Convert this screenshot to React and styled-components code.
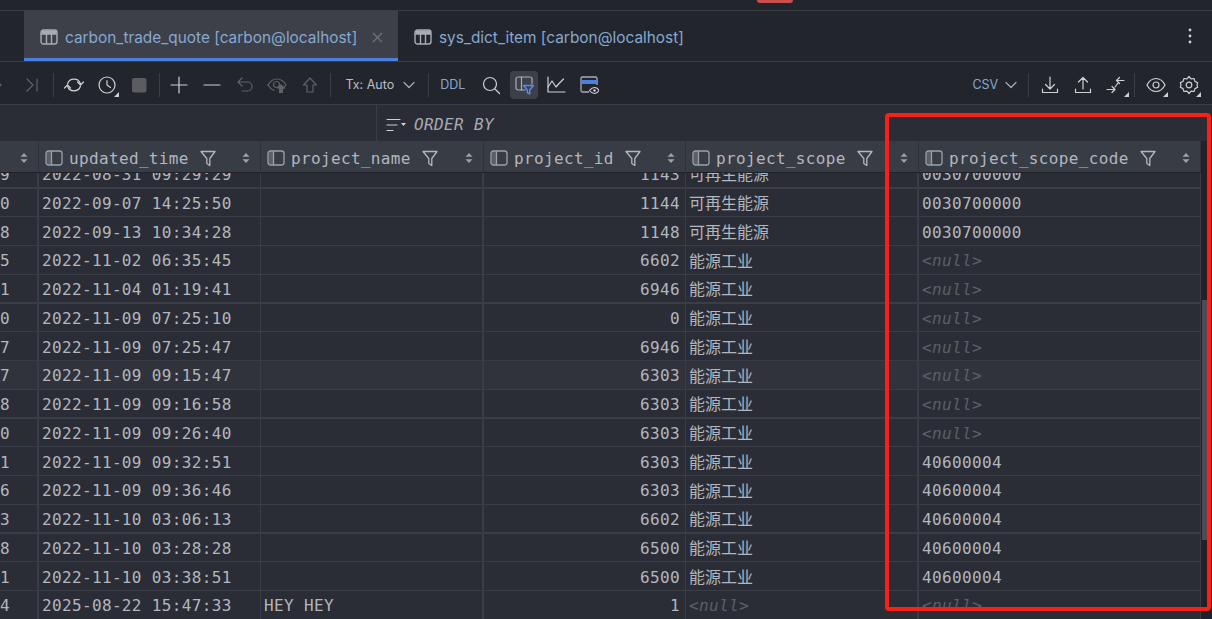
import * as React from "react"
import styled, { createGlobalStyle } from 'styled-components'

const MONO = `"DejaVu Sans Mono", "Liberation Mono", "Noto Sans CJK SC", monospace`
const UI = `Inter, "Noto Sans", sans-serif`

const GlobalStyle = createGlobalStyle`
  html, body {
    margin: 0;
    padding: 0;
    background: #2a2d35;
    overflow: hidden;
  }
`

const Screen = styled.div`
  position: relative;
  width: 1212px;
  height: 619px;
  overflow: hidden;
  display: flex;
  flex-direction: column;
  background: #2a2d35;
`

const TopStrip = styled.div`
  height: 10px;
  flex: none;
  display: flex;
  justify-content: flex-start;
  background: #22252c;
  border-bottom: 1px solid #3a3d45;
`

const RedTab = styled.div`
  width: 36px;
  height: 3px;
  margin-left: 757px;
  background: #c94f4f;
  border-radius: 0 0 5px 5px;
`

const TabBar = styled.div`
  height: 50px;
  flex: none;
  display: flex;
  align-items: stretch;
  padding-left: 24px;
  background: #22252c;
  border-bottom: 1px solid #3a3d45;
`

const Tab = styled.div`
  display: flex;
  align-items: center;
  width: ${p => p.$width}px;
  padding-left: 16px;
  padding-top: 2px;
  box-sizing: border-box;
  font-family: ${UI};
  font-size: 15.4px;
  color: #86a8d2;
  white-space: nowrap;
  background: ${p => (p.$active ? '#3d4049' : 'transparent')};
  box-shadow: ${p => (p.$active ? 'inset 0 -3px 0 #4a80e0' : 'none')};
`

const TabIcon = styled.svg`
  width: 18px;
  height: 16px;
  margin-right: 7px;
  flex: none;
`

const TabClose = styled.svg`
  width: 11px;
  height: 11px;
  margin-left: 15px;
  flex: none;
`

const MoreDots = styled.div`
  margin-left: auto;
  width: 44px;
  display: flex;
  align-items: center;
  justify-content: center;
  color: #ced0d6;
`

const Toolbar = styled.div`
  height: 42px;
  flex: none;
  display: flex;
  align-items: center;
  box-sizing: content-box;
  padding-top: 0;
  background: #22252c;
  border-bottom: 1px solid #3a3d45;
  overflow: hidden;
`

const ToolRow = styled.div`
  flex: 1;
  min-width: 0;
  display: flex;
  align-items: center;
  padding-top: 3px;
`

const ToolButton = styled.div`
  position: relative;
  width: ${p => p.$width || 32.75}px;
  height: 28px;
  flex: none;
  display: flex;
  align-items: center;
  justify-content: center;
  border-radius: 4px;
  background: ${p => (p.$active ? '#3d4049' : 'transparent')};
  margin-left: ${p => p.$offset || 0}px;
`

const CornerMark = styled.span`
  position: absolute;
  right: 4px;
  bottom: 2px;
  width: 0;
  height: 0;
  border-style: solid;
  border-width: 0 0 5px 5px;
  border-color: transparent transparent #ced0d6 transparent;
`

const ToolSep = styled.div`
  width: 1px;
  height: 24px;
  flex: none;
  margin: ${p => p.$margin || '0 4px'};
  background: #3a3d45;
`

const ToolText = styled.span`
  flex: none;
  font-family: ${UI};
  font-size: 12.5px;
  color: ${p => p.$color || '#bcbec4'};
  margin-left: ${p => p.$left || 0}px;
`

const Chevron = styled.svg`
  width: 12px;
  height: 8px;
  flex: none;
  margin-left: ${p => p.$left}px;
  margin-right: ${p => p.$right}px;
`

const Spacer = styled.div`
  flex: ${p => (p.$size ? `0 0 ${p.$size}px` : 1)};
`

const FilterBar = styled.div`
  height: 36px;
  flex: none;
  display: flex;
  background: #2a2d35;
`

const WhereSide = styled.div`
  width: 376px;
  flex: none;
  border-right: 1px solid #3a3d45;
`

const OrderSide = styled.div`
  display: flex;
  align-items: center;
  padding-left: 9px;
  padding-top: 3px;
  font-family: ${MONO};
  font-style: italic;
  font-size: 16px;
  letter-spacing: 0.35px;
  color: #a8abb3;
`

const OrderLabel = styled.span`
  margin-left: 8px;
`

const TableArea = styled.div`
  flex: 1;
  min-height: 0;
  display: flex;
`

const TableMain = styled.div`
  width: 1201px;
  flex: none;
  display: flex;
  flex-direction: column;
  min-height: 0;
`

const HeaderRow = styled.div`
  height: 32px;
  flex: none;
  display: grid;
  grid-template-columns: 39px 222px 223px 202px 233px 282px;
  background: #383c45;
  border-bottom: 1px solid #1f2228;
  box-sizing: border-box;
  position: relative;
  z-index: 1;
`

const HeaderCell = styled.div`
  display: flex;
  align-items: center;
  box-sizing: border-box;
  padding: 3px 10px 0 6px;
  border-right: 1px solid #2f323a;
  font-family: ${MONO};
  font-size: 16px;
  letter-spacing: 0.35px;
  color: #b3b6bd;
  white-space: nowrap;
`

const ColumnIcon = styled.svg`
  width: 18px;
  height: 16px;
  flex: none;
  margin-right: 6px;
`

const FunnelIcon = styled.svg`
  width: 16px;
  height: 17px;
  flex: none;
  margin-left: 11px;
`

const SortIcon = styled.svg`
  width: 8px;
  height: 12px;
  flex: none;
  margin-left: auto;
`

const RowsClip = styled.div`
  flex: 1;
  min-height: 0;
  overflow: hidden;
`

const RowsInner = styled.div`
  margin-top: -13.25px;
`

const Row = styled.div`
  height: 28.75px;
  box-sizing: border-box;
  display: grid;
  grid-template-columns: 39px 222px 223px 202px 233px 282px;
  align-items: stretch;
  background: ${p => (p.$hover ? '#30333b' : 'transparent')};
  border-bottom: ${p => (p.$heavy ? '2px' : '1px')} solid #3a3d45;
`

const Cell = styled.div`
  display: flex;
  align-items: center;
  justify-content: ${p => (p.$right ? 'flex-end' : 'flex-start')};
  box-sizing: border-box;
  padding: 2px 5px 0 3px;
  border-right: ${p => (p.$thick ? '2px' : '1px')} solid #3a3d45;
  font-family: ${MONO};
  font-size: 16px;
  letter-spacing: 0.35px;
  color: #b3b6bd;
  white-space: nowrap;
  overflow: hidden;
`

const EdgeDigit = styled(Cell)`
  padding-left: 0;
`

const CjkText = styled.span`
  font-family: "Noto Sans CJK SC", sans-serif;
  font-size: 16px;
  letter-spacing: 0;
  margin-top: -2px;
`

const NullText = styled.span`
  font-style: italic;
  color: #5c5f66;
`

const ScrollTrack = styled.div`
  flex: 1;
  background: #1f2228;
  box-sizing: border-box;
  padding-left: 1px;
`

const ScrollThumb = styled.div`
  width: 5px;
  height: 240px;
  margin-top: 159px;
  background: #4a4d55;
`

const Highlight = styled.div`
  position: absolute;
  left: 885px;
  top: 113px;
  width: 326px;
  height: 498px;
  box-sizing: border-box;
  border: 4px solid #fb2014;
  border-radius: 4px;
  pointer-events: none;
  z-index: 3;
`

const stroke = { fill: 'none', stroke: '#ced0d6', strokeWidth: 1.2, strokeLinecap: 'round', strokeLinejoin: 'round' }
const dim = { ...stroke, stroke: '#5f6267' }

const Svg = ({ children, w = 20, h = 20 }) => (
  <svg width={w} height={h} viewBox={`0 0 ${w} ${h}`} style={{ display: 'block' }}>{children}</svg>
)

const TableGlyph = () => (
  <TabIcon viewBox="0 0 18 16">
    <g fill="none" stroke="#a9acb3" strokeWidth="1.4">
      <rect x="1" y="1" width="16" height="14" rx="2.5" />
      <path d="M1 5h16M6.5 5v10M11.5 5v10" />
    </g>
    <rect x="1.5" y="1.5" width="15" height="3.5" rx="1.5" fill="#a9acb3" />
  </TabIcon>
)

const SortGlyph = () => (
  <SortIcon viewBox="0 0 8 12">
    <path d="M4 1L7.5 4.8H.5zM4 11L.5 7.2h7z" fill="#9da0a8" />
  </SortIcon>
)

const HeaderLabel = ({ name }) => (
  <HeaderCell>
    <ColumnIcon viewBox="0 0 18 16">
      <g fill="none" stroke="#9da0a8" strokeWidth="1.3">
        <rect x="1" y="1" width="16" height="14" rx="2.5" />
        <path d="M6.5 1v14" />
      </g>
      <rect x="1.6" y="1.6" width="4.9" height="12.8" rx="1.5" fill="#9da0a8" opacity="0.35" />
    </ColumnIcon>
    {name}
    <FunnelIcon viewBox="0 0 16 17">
      <path d="M1 1.5h14L9.8 8.5v7l-3-2V8.5z" fill="none" stroke="#b3b6bd" strokeWidth="1.3" strokeLinejoin="round" />
    </FunnelIcon>
    <SortGlyph />
  </HeaderCell>
)

const Tool = ({ children, corner, active, offset, width }) => (
  <ToolButton $active={active} $offset={offset} $width={width}>
    {children}
    {corner && <CornerMark />}
  </ToolButton>
)

const ROWS = [
  ['9', '2022-08-31 09:29:29', '', '1143', '可再生能源', '0030700000'],
  ['0', '2022-09-07 14:25:50', '', '1144', '可再生能源', '0030700000'],
  ['8', '2022-09-13 10:34:28', '', '1148', '可再生能源', '0030700000'],
  ['5', '2022-11-02 06:35:45', '', '6602', '能源工业', null],
  ['1', '2022-11-04 01:19:41', '', '6946', '能源工业', null],
  ['0', '2022-11-09 07:25:10', '', '0', '能源工业', null],
  ['7', '2022-11-09 07:25:47', '', '6946', '能源工业', null],
  ['7', '2022-11-09 09:15:47', '', '6303', '能源工业', null],
  ['8', '2022-11-09 09:16:58', '', '6303', '能源工业', null],
  ['0', '2022-11-09 09:26:40', '', '6303', '能源工业', null],
  ['1', '2022-11-09 09:32:51', '', '6303', '能源工业', '40600004'],
  ['6', '2022-11-09 09:36:46', '', '6303', '能源工业', '40600004'],
  ['3', '2022-11-10 03:06:13', '', '6602', '能源工业', '40600004'],
  ['8', '2022-11-10 03:28:28', '', '6500', '能源工业', '40600004'],
  ['1', '2022-11-10 03:38:51', '', '6500', '能源工业', '40600004'],
  ['4', '2025-08-22 15:47:33', 'HEY HEY', '1', null, null],
]

const COLUMNS = ['updated_time', 'project_name', 'project_id', 'project_scope', 'project_scope_code']

const App = () => {
  return (
    <Screen>
      <GlobalStyle />
      <TopStrip>
        <RedTab />
      </TopStrip>
      <TabBar>
        <Tab $active $width={374}>
          <TableGlyph />
          carbon_trade_quote [carbon@localhost]
          <TabClose viewBox="0 0 11 11">
            <path d="M1 1l9 9M10 1l-9 9" stroke="#6f7279" strokeWidth="1.2" />
          </TabClose>
        </Tab>
        <Tab $width={300}>
          <TableGlyph />
          sys_dict_item [carbon@localhost]
        </Tab>
        <MoreDots>
          <Svg w={4} h={16}>
            <circle cx="2" cy="2" r="1.4" fill="#ced0d6" />
            <circle cx="2" cy="8" r="1.4" fill="#ced0d6" />
            <circle cx="2" cy="14" r="1.4" fill="#ced0d6" />
          </Svg>
        </MoreDots>
      </TabBar>
      <Toolbar>
        <ToolRow>
          <Tool offset={-17}>
            <Svg><path d="M7 5l5 5-5 5" {...dim} /></Svg>
          </Tool>
          <Tool>
            <Svg><path d="M5 4l6 6-6 6M15 4v12" {...dim} /></Svg>
          </Tool>
          <ToolSep />
          <Tool>
            <Svg>
              <path d="M3.5 9A6.8 6.8 0 0 1 16.5 9" {...stroke} />
              <path d="M13.5 7l3 3 3-3" {...stroke} />
              <path d="M16.5 11A6.8 6.8 0 0 1 3.5 11" {...stroke} />
              <path d="M.5 13l3-3 3 3" {...stroke} />
            </Svg>
          </Tool>
          <Tool corner>
            <Svg>
              <circle cx="10" cy="10" r="8" {...stroke} />
              <path d="M10 5.5V10l3.5 2.5" {...stroke} />
            </Svg>
          </Tool>
          <Tool>
            <Svg><rect x="3" y="3" width="14.5" height="14.5" rx="2" fill="#5b5c5f" /></Svg>
          </Tool>
          <ToolSep $margin="0 3px" />
          <Tool>
            <Svg><path d="M10 2v16M2 10h16" {...stroke} /></Svg>
          </Tool>
          <Tool>
            <Svg><path d="M2 10h16" {...stroke} /></Svg>
          </Tool>
          <Tool>
            <Svg><path d="M7 3L3 7l4 4M3 7h9.5a4.5 4.5 0 0 1 0 9H7" {...dim} /></Svg>
          </Tool>
          <Tool>
            <Svg>
              <path d="M1 10c2-3.5 5-6 9-6s7 2.5 9 6c-1 1.5-2 3-3.5 4" {...dim} />
              <path d="M1 10c1.5 2.5 3.5 4.5 6 5.5" {...dim} />
              <circle cx="9.5" cy="9.5" r="3" {...dim} />
              <path d="M14 9l4.5 4.5H16V18h-4v-4.5H9.5z" fill="#5f6267" />
            </Svg>
          </Tool>
          <Tool>
            <Svg><path d="M10 3l6.5 7H13v7H7v-7H3.5z" {...dim} /></Svg>
          </Tool>
          <ToolSep $margin="0 3px 0 3px" />
          <ToolText $left={12}>Tx: Auto</ToolText>
          <Chevron viewBox="0 0 12 8" $left={9} $right={13}>
            <path d="M1 1.5l5 5 5-5" {...stroke} stroke="#a9acb3" />
          </Chevron>
          <ToolSep $margin="0" />
          <ToolText $left={11} $color="#86a8d2">DDL</ToolText>
          <Tool offset={9}>
            <Svg>
              <circle cx="9" cy="9" r="6.5" {...stroke} />
              <path d="M14 14l4.5 4.5" {...stroke} />
            </Svg>
          </Tool>
          <Tool active offset={2.5} width={28}>
            <Svg>
              <path d="M11 15H4a2 2 0 0 1-2-2V4a2 2 0 0 1 2-2h12a2 2 0 0 1 2 2v5" {...stroke} stroke="#a9acb3" />
              <path d="M7.5 2v13" {...stroke} stroke="#a9acb3" />
              <path d="M9.5 10.5h10l-3.8 4.5v4l-2.4-1.3v-2.700z" fill="none" stroke="#548af7" strokeWidth="1.4" strokeLinejoin="round" />
            </Svg>
          </Tool>
          <Tool offset={2.5}>
            <Svg>
              <path d="M2 2v15h17" {...stroke} />
              <path d="M2 12l4-6 4 6 3-3.5L17.5 4" {...stroke} />
            </Svg>
          </Tool>
          <Tool>
            <Svg>
              <path d="M10 17H3.5A1.5 1.5 0 0 1 2 15.5v-12A1.5 1.5 0 0 1 3.5 2h13A1.5 1.5 0 0 1 18 3.5V10" fill="none" stroke="#a9acb3" strokeWidth="1.3" />
              <rect x="2" y="5" width="16" height="4" fill="#4a80e0" />
              <path d="M10.5 15.5c1.5-2 3-3 5-3s3.5 1 4.5 3c-1 2-2.5 3-4.5 3s-3.5-1-5-3z" fill="#22252c" stroke="#ced0d6" strokeWidth="1.1" />
              <circle cx="15.5" cy="15.5" r="1.2" fill="#ced0d6" />
            </Svg>
          </Tool>
          <Spacer />
          <ToolText $color="#86a8d2">CSV</ToolText>
          <Chevron viewBox="0 0 12 8" $left={7} $right={11}>
            <path d="M1 1.5l5 5 5-5" {...stroke} stroke="#a9acb3" />
          </Chevron>
          <ToolSep $margin="0" />
          <Tool offset={4}>
            <Svg><path d="M10 2v12M5.5 9.5L10 14l4.5-4.5M2.5 14v3.5h15V14" {...stroke} /></Svg>
          </Tool>
          <Tool offset={1}>
            <Svg><path d="M10 14V2.5M5.5 7L10 2.500 14.5 7M2.5 14v3.5h15V14" {...stroke} /></Svg>
          </Tool>
          <Tool corner>
            <Svg><path d="M18 5.5H10.5M13.5 2.500l-3 3 3 3M1 14.500h8M6 11.500l3 3-3 3M9 12l3-4" {...stroke} /></Svg>
          </Tool>
          <ToolSep $margin="0 3px 0 1px" />
          <Tool corner offset={2}>
            <Svg>
              <path d="M1 10c2-4 5-6.5 9-6.5S17 6 19 10c-2 4-5 6.5-9 6.5S3 14 1 10z" {...stroke} />
              <circle cx="10" cy="10" r="3" {...stroke} />
            </Svg>
          </Tool>
          <Tool corner>
            <Svg>
              <path d="M10 1.5l2 2.300 3-.3 1 2.900 2.700 1.400-.7 2.200.7 2.200L16 13.600l-1 2.900-3-.3-2 2.300-2-2.300-3 .3-1-2.900-2.700-1.400.7-2.200-.7-2.200L4 6.400l1-2.900 3 .3z" {...stroke} />
              <circle cx="10" cy="10" r="2.8" {...stroke} />
            </Svg>
          </Tool>
          <Spacer $size={7} />
        </ToolRow>
      </Toolbar>
      <FilterBar>
        <WhereSide />
        <OrderSide>
          <Svg w={20} h={14}>
            <path d="M1 1.5h13M1 7h10M1 12.5h6" {...stroke} />
            <path d="M15 5h5l-2.5 3z" fill="#ced0d6" />
          </Svg>
          <OrderLabel>ORDER BY</OrderLabel>
        </OrderSide>
      </FilterBar>
      <TableArea>
        <TableMain>
          <HeaderRow>
            <HeaderCell><SortGlyph /></HeaderCell>
            {COLUMNS.map(name => <HeaderLabel key={name} name={name} />)}
          </HeaderRow>
          <RowsClip>
            <RowsInner>
              {ROWS.map((row, i) => (
                <Row key={i} $hover={i === 7} $heavy={i % 4 === 0}>
                  <EdgeDigit $thick>{row[0]}</EdgeDigit>
                  <Cell>{row[1]}</Cell>
                  <Cell $thick>{row[2]}</Cell>
                  <Cell $right>{row[3]}</Cell>
                  <Cell $thick>
                    {row[4] ? <CjkText>{row[4]}</CjkText> : <NullText>&lt;null&gt;</NullText>}
                  </Cell>
                  <Cell>{row[5] || <NullText>&lt;null&gt;</NullText>}</Cell>
                </Row>
              ))}
            </RowsInner>
          </RowsClip>
        </TableMain>
        <ScrollTrack>
          <ScrollThumb />
        </ScrollTrack>
      </TableArea>
      <Highlight />
    </Screen>
  )
}

export default App
